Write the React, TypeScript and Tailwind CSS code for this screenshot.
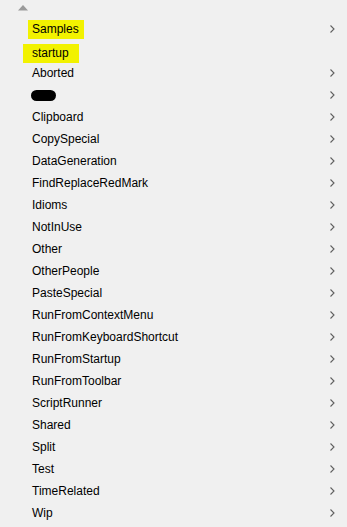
const items: { name: string; sub: boolean; mark?: "yellow" | "yellow2" | "blob" }[] = [
  { name: "Samples", sub: true, mark: "yellow" },
  { name: "startup", sub: false, mark: "yellow2" },
  { name: "Aborted", sub: true },
  { name: "", sub: true, mark: "blob" },
  { name: "Clipboard", sub: true },
  { name: "CopySpecial", sub: true },
  { name: "DataGeneration", sub: true },
  { name: "FindReplaceRedMark", sub: true },
  { name: "Idioms", sub: true },
  { name: "NotInUse", sub: true },
  { name: "Other", sub: true },
  { name: "OtherPeople", sub: true },
  { name: "PasteSpecial", sub: true },
  { name: "RunFromContextMenu", sub: true },
  { name: "RunFromKeyboardShortcut", sub: true },
  { name: "RunFromStartup", sub: true },
  { name: "RunFromToolbar", sub: true },
  { name: "ScriptRunner", sub: true },
  { name: "Shared", sub: true },
  { name: "Split", sub: true },
  { name: "Test", sub: true },
  { name: "TimeRelated", sub: true },
  { name: "Wip", sub: true },
];

const Chevron = () => (
  <svg width="5" height="8" viewBox="0 0 5 8" className="text-[#606060]">
    <path d="M0.5 0.5 L4 4 L0.5 7.5" fill="none" stroke="currentColor" strokeWidth="1.1" />
  </svg>
);

const App = () => {
  return (
    <div
      className="w-[347px] h-[527px] bg-[#f0f0f0] text-[12px] text-black overflow-hidden"
      style={{ fontFamily: '"Liberation Sans", Arial, sans-serif' }}
    >
      <div className="h-[18px] flex items-start pt-[5px] pl-[18px]">
        <svg width="10" height="6" viewBox="0 0 10 6">
          <path d="M5 0 L10 5.5 L0 5.5 Z" fill="#9a9a9a" />
        </svg>
      </div>
      <ul className="flex flex-col">
        {items.map((item, i) => (
          <li key={i} className="h-[22px] flex items-center justify-between pl-[32px] pr-[12px]">
            {item.mark === "blob" ? (
              <span className="block w-[25px] h-[11px] rounded-full bg-black -ml-[1px]" />
            ) : item.mark === "yellow" ? (
              <span className="bg-[#f2f200] -ml-[4px] pl-[4px] pr-[5px] py-[2px] leading-[15px]">{item.name}</span>
            ) : item.mark === "yellow2" ? (
              <span className="bg-[#f2f200] -ml-[9px] pl-[9px] pr-[10px] py-[2px] mt-[4px] leading-[15px]">{item.name}</span>
            ) : (
              <span>{item.name}</span>
            )}
            {item.sub && <Chevron />}
          </li>
        ))}
      </ul>
    </div>
  );
};

export default App;
